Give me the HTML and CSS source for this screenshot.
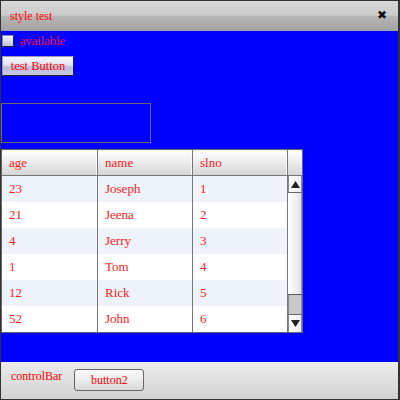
FILE: index.html
```html
<!DOCTYPE html>
<html>
<head>
<meta charset="utf-8">
<link rel="stylesheet" href="styles.css">
</head>
<body>
<div class="window">
  <div class="titlebar">
    <span class="title">style test</span>
    <span class="close">✖</span>
  </div>
  <div class="content">
    <div class="check-row">
      <span class="checkbox"></span>
      <span class="check-label">available</span>
    </div>
    <button class="btn">test Button</button>
    <div class="emptybox"></div>
    <div class="table">
      <div class="cols">
        <div class="hcell">age</div><div class="hcell">name</div><div class="hcell">slno</div>
        <div class="cell odd">23</div><div class="cell odd">Joseph</div><div class="cell odd">1</div>
        <div class="cell">21</div><div class="cell">Jeena</div><div class="cell">2</div>
        <div class="cell odd">4</div><div class="cell odd">Jerry</div><div class="cell odd">3</div>
        <div class="cell">1</div><div class="cell">Tom</div><div class="cell">4</div>
        <div class="cell odd">12</div><div class="cell odd">Rick</div><div class="cell odd">5</div>
        <div class="cell">52</div><div class="cell">John</div><div class="cell">6</div>
      </div>
      <div class="scroll">
        <div class="scroll-head"></div>
        <div class="arrow up"><svg width="9" height="7" viewBox="0 0 9 7"><polygon points="4.5,0 9,7 0,7" fill="#222"/></svg></div>
        <div class="track"></div>
        <div class="thumb"></div>
        <div class="arrow down"><svg width="9" height="7" viewBox="0 0 9 7"><polygon points="0,0 9,0 4.5,7" fill="#222"/></svg></div>
      </div>
    </div>
  </div>
  <div class="controlbar">
    <span class="cb-label">controlBar</span>
    <button class="btn2">button2</button>
  </div>
</div>
</body>
</html>
```
FILE: styles.css
```css
* { box-sizing: border-box; }
html, body { margin: 0; padding: 0; }
body { width: 400px; height: 400px; overflow: hidden; font-family: "Liberation Serif", serif; }

.window {
  width: 400px;
  height: 400px;
  border: 1px solid #333;
  border-right-width: 2px;
  display: flex;
  flex-direction: column;
}

.titlebar {
  height: 30px;
  flex: none;
  display: flex;
  align-items: center;
  justify-content: space-between;
  padding: 0 11px 0 9px;
  background: linear-gradient(#d8d8d8, #cacaca 47%, #b6b6b6 52%, #a2a2a2);
}
.title { color: #ff0000; font-size: 12px; }
.close { color: #111; font-size: 12px; font-family: "DejaVu Sans", sans-serif; font-weight: bold; margin-top: -2px; }

.content {
  flex: 1;
  background: #0000ff;
  padding: 4px 0 0 0;
  display: flex;
  flex-direction: column;
  align-items: flex-start;
}

.check-row { display: flex; align-items: center; height: 12px; margin-left: 1px; }
.checkbox {
  width: 12px; height: 12px;
  border: 1px solid #8a8ab0;
  border-right-color: #222;
  border-bottom-color: #222;
  background: linear-gradient(#f4f4fa, #c4c4e0);
}
.check-label { color: #ff0033; font-size: 12.5px; margin-left: 6px; }

.btn {
  margin: 9px 0 0 1px;
  width: 72px; height: 20px;
  padding: 0;
  font-family: "Liberation Serif", serif;
  font-size: 12.5px;
  color: #ff0000;
  border: 1px solid #9a9ac0;
  border-right-color: #222;
  border-bottom-color: #222;
  background: linear-gradient(#f6f6fb, #e2e2f0 45%, #bdbddc 55%, #c8c8e4);
}

.emptybox {
  margin-top: 27px;
  width: 150px;
  height: 40px;
  border: 1px solid #6a6a6a;
}

.table {
  margin-top: 6px;
  display: flex;
  border: 1px solid #666;
  background: #fff;
}
.cols {
  display: grid;
  grid-template-columns: 96px 95px 95px;
  grid-auto-rows: 26px;
}
.hcell {
  height: 26px;
  border-right: 1px solid #777;
  border-bottom: 1px solid #777;
  background: linear-gradient(#ffffff, #f0f0f0 40%, #d6d6d6);
  color: #ff2020;
  font-size: 13px;
  padding-left: 7px;
  display: flex;
  align-items: center;
  box-shadow: inset -1px 0 0 #fafafa;
}
.cell {
  border-right: 1px solid #777;
  color: #ff2020;
  font-size: 13px;
  padding-left: 7px;
  display: flex;
  align-items: center;
  background: #fff;
}
.cell.odd { background: #eef3fa; }

.scroll { width: 14px; display: flex; flex-direction: column; }
.scroll-head {
  height: 26px;
  border-bottom: 1px solid #777;
  background: linear-gradient(#ffffff, #f0f0f0 40%, #d6d6d6);
}
.arrow {
  height: 17px;
  display: flex;
  align-items: center;
  justify-content: center;
  background: linear-gradient(90deg, #ffffff, #ececec);
  border: 1px solid #888;
  border-top: none;
}
.arrow.up { border-bottom: 1px solid #666; }
.arrow.down { border-top: 1px solid #666; border-bottom: none; height: 18px; }
.track { flex: 1; background: linear-gradient(90deg, #ffffff, #f0f0f0 60%, #e0e0e0); border-right: 1px solid #999; }
.thumb { height: 20px; background: #c8c8c8; border-top: 1px solid #555; border-left: 1px solid #888; border-right: 1px solid #888; }

.controlbar {
  height: 37px;
  flex: none;
  display: flex;
  align-items: flex-start;
  background: linear-gradient(#ececec, #d2d2d2);
}
.cb-label { color: #ff0000; font-size: 12px; margin: 7px 0 0 10px; }
.btn2 {
  margin: 7px 0 0 12px;
  width: 70px; height: 22px;
  padding: 0;
  font-family: "Liberation Serif", serif;
  font-size: 12px;
  color: #ff0000;
  border: 1px solid #666;
  border-radius: 3px;
  background: linear-gradient(#fafafa, #ececec 50%, #d8d8d8);
}
```
